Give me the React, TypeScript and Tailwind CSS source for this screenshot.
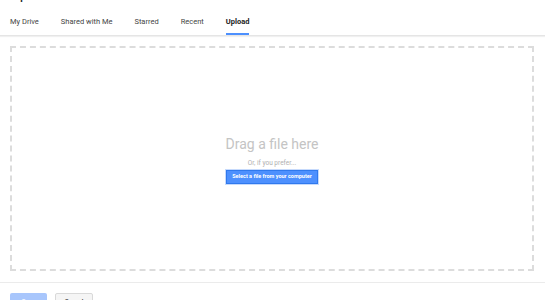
const tabs = ['My Drive', 'Shared with Me', 'Starred', 'Recent', 'Upload'];

export default function App() {
  const active = 'Upload';

  return (
    <div className="w-[545px] h-[300px] overflow-hidden bg-white flex flex-col font-['Roboto',_'Liberation_Sans',_sans-serif]">
      <div className="h-0 relative">
        <div className="absolute left-[10px] -top-[15px] text-[15px] leading-[18px] text-[#222]">Upload</div>
      </div>

      <div className="flex items-end gap-[22px] px-[10px] pt-[17px] border-b border-[#e5e5e5] shadow-[0_1px_1px_rgba(0,0,0,0.06)]">
        {tabs.map((t) => (
          <div
            key={t}
            className={`pb-[7px] text-[7.5px] leading-[9px] border-b-2 ${
              t === active ? 'font-bold text-[#222] border-[#4d90fe]' : 'text-[#444] border-transparent'
            }`}
          >
            {t}
          </div>
        ))}
      </div>

      <div className="pl-[10px] pr-[11px] pt-[10px]">
        <div className="h-[225px] border-2 border-dashed border-[#dcdcdc] flex flex-col items-center justify-center pt-[2px]">
          <div className="text-[14px] leading-[17px] text-[#c4c4c4]">Drag a file here</div>
          <div className="mt-[6px] text-[6.5px] leading-[8px] text-[#b0b0b0]">Or, if you prefer...</div>
          <button className="mt-[3px] h-[14px] w-[92px] bg-[#4d90fe] border border-[#3079ed] text-white text-[5.5px] font-bold leading-none shadow-[0_0_0_1px_#c6dafc]">
            Select a file from your computer
          </button>
        </div>
      </div>

      <div className="mt-[11px] border-t border-[#ebebeb]" />

      <div className="flex gap-[8px] px-[10px] pt-[10px]">
        <button className="w-[37px] h-[16px] rounded-[2px] bg-[#a8c6fc] text-white text-[6px] font-bold leading-none">Open</button>
        <button className="w-[38px] h-[16px] rounded-[2px] bg-[#f5f5f5] border border-[#d9d9d9] text-[#444] text-[6px] font-bold leading-none">Cancel</button>
      </div>
    </div>
  );
}
